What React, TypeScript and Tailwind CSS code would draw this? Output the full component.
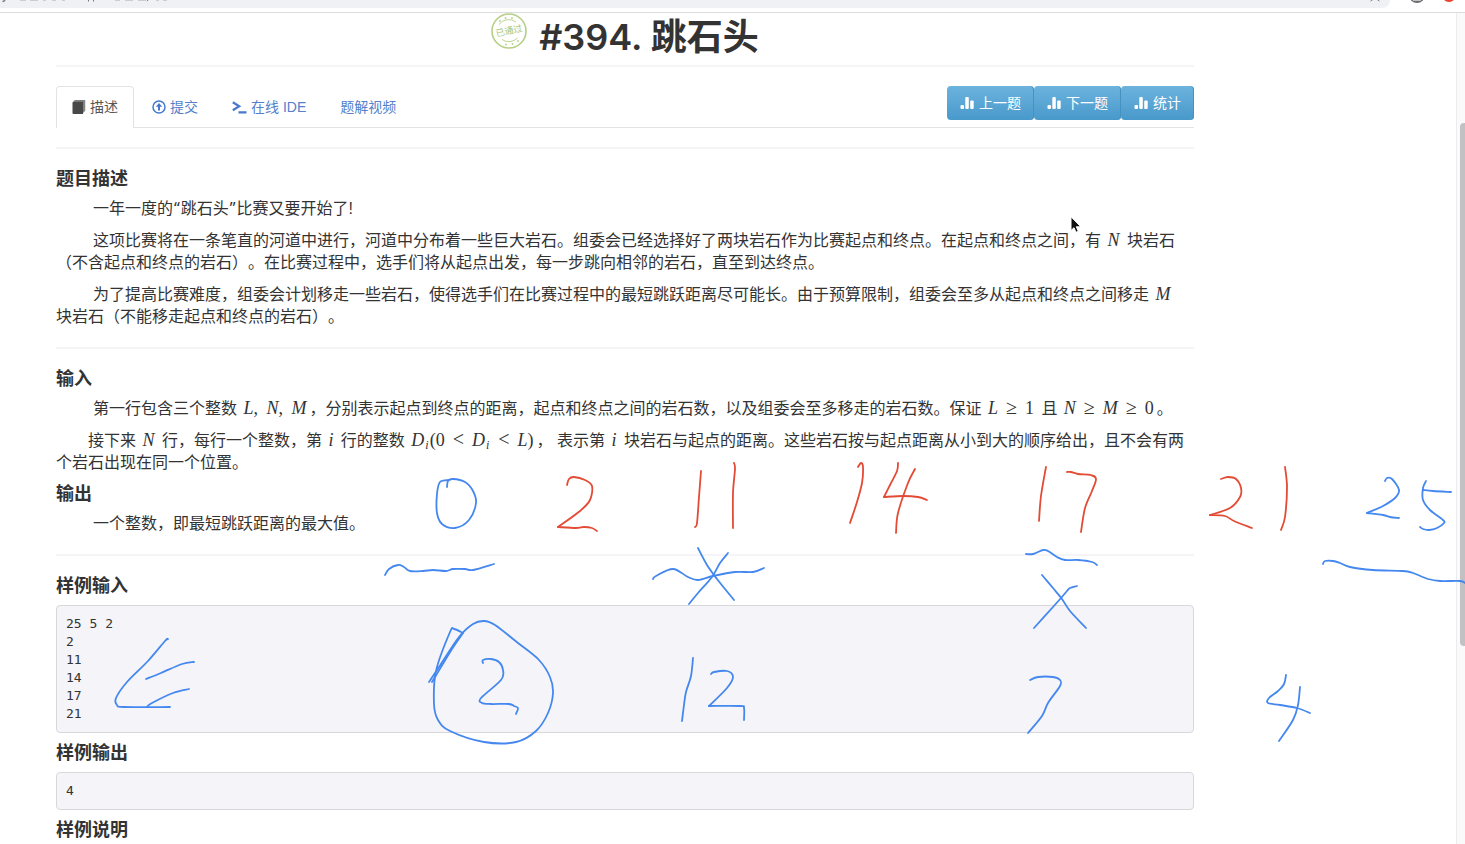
import type { ReactNode } from "react";

type Point = [number, number];
type Stroke = { ink: "blue" | "red"; points: Point[] };

const STROKES: Stroke[] = [
  // 0
  { ink: "blue", points: [[447, 487], [448, 481], [453, 479], [465, 482], [473, 491], [476, 503], [469, 520], [455, 528], [442, 524], [437, 513], [437, 494], [440, 482], [449, 480]] },
  // 2
  { ink: "red", points: [[567, 485], [569, 479], [574, 477], [585, 480], [592, 486], [590, 500], [580, 511], [558, 527]] },
  { ink: "red", points: [[558, 527], [576, 528], [584, 527], [592, 528], [597, 531]] },
  // 11
  { ink: "red", points: [[701, 471], [699, 497], [697, 523], [695, 527]] },
  { ink: "red", points: [[734, 463], [735, 469], [733, 493], [733, 528]] },
  // 14
  { ink: "red", points: [[858, 467], [861, 463], [863, 467], [862, 483], [857, 502], [850, 523]] },
  { ink: "red", points: [[898, 463], [897, 471], [890, 485], [884, 497]] },
  { ink: "red", points: [[884, 497], [903, 496], [918, 497], [927, 500]] },
  { ink: "red", points: [[915, 469], [908, 483], [898, 513], [896, 533]] },
  // 17
  { ink: "red", points: [[1046, 467], [1041, 496], [1039, 521]] },
  { ink: "red", points: [[1067, 472], [1071, 472], [1078, 474], [1091, 475], [1096, 479], [1092, 491], [1085, 508], [1081, 532]] },
  // 21
  { ink: "red", points: [[1221, 479], [1228, 477], [1236, 479], [1241, 488], [1240, 497], [1230, 508], [1210, 515]] },
  { ink: "red", points: [[1210, 515], [1225, 516], [1234, 521], [1252, 528]] },
  { ink: "red", points: [[1285, 467], [1287, 487], [1285, 517], [1281, 530]] },
  // 25
  { ink: "blue", points: [[1385, 481], [1387, 478], [1392, 479], [1399, 490], [1395, 498], [1383, 506], [1367, 513]] },
  { ink: "blue", points: [[1367, 513], [1383, 515], [1390, 517], [1399, 518]] },
  { ink: "blue", points: [[1426, 481], [1423, 488], [1423, 500], [1430, 510], [1443, 520], [1444, 523], [1437, 528], [1429, 530], [1423, 529], [1420, 527]] },
  { ink: "blue", points: [[1423, 490], [1433, 491], [1451, 492]] },
  // underlines
  { ink: "blue", points: [[385, 575], [389, 569], [398, 565], [404, 567], [410, 571], [423, 571], [433, 570], [446, 571], [453, 569], [465, 569], [473, 570], [494, 564]] },
  { ink: "blue", points: [[653, 579], [656, 576], [673, 569], [688, 577], [698, 580], [713, 576], [735, 572], [753, 572], [764, 568]] },
  { ink: "blue", points: [[1026, 554], [1033, 554], [1043, 550], [1048, 551], [1057, 557], [1065, 560], [1078, 560], [1092, 562], [1097, 565]] },
  { ink: "blue", points: [[1323, 564], [1325, 561], [1333, 561], [1340, 563], [1350, 567], [1373, 570], [1403, 571], [1413, 573], [1428, 579], [1440, 581], [1460, 581], [1465, 583]] },
  // crosses
  { ink: "blue", points: [[698, 548], [707, 565], [717, 579], [734, 600]] },
  { ink: "blue", points: [[728, 553], [720, 563], [712, 577], [698, 593], [689, 604]] },
  { ink: "blue", points: [[1042, 575], [1053, 588], [1062, 599], [1070, 611], [1086, 628]] },
  { ink: "blue", points: [[1077, 586], [1070, 588], [1067, 591], [1061, 598], [1053, 607], [1034, 628]] },
  // arrow
  { ink: "blue", points: [[168, 639], [165, 641], [148, 661], [127, 682], [116, 698], [117, 705], [124, 707], [170, 707]] },
  { ink: "blue", points: [[146, 679], [161, 673], [182, 664], [194, 662]] },
  { ink: "blue", points: [[147, 707], [152, 703], [173, 693], [189, 689]] },
  // circled 2
  { ink: "blue", points: [[429, 682], [439, 667], [459, 637], [473, 624], [484, 621], [495, 625], [518, 643], [539, 660], [550, 677], [553, 693], [548, 713], [536, 731], [516, 742], [484, 742], [450, 731], [438, 720], [434, 704], [436, 671], [450, 632], [454, 629], [463, 633]] },
  { ink: "blue", points: [[463, 633], [452, 649], [432, 682]] },
  { ink: "blue", points: [[483, 663], [483, 660], [491, 659], [499, 662], [503, 670], [501, 680], [481, 698], [482, 703], [491, 704], [509, 704], [514, 706], [518, 708], [516, 714]] },
  // 12
  { ink: "blue", points: [[693, 658], [691, 676], [686, 692], [684, 705], [682, 721]] },
  { ink: "blue", points: [[711, 674], [714, 672], [727, 671], [733, 677], [727, 688], [709, 706]] },
  { ink: "blue", points: [[709, 706], [740, 706], [744, 708], [744, 720]] },
  // 7
  { ink: "blue", points: [[1030, 680], [1038, 677], [1053, 677], [1060, 680], [1060, 686], [1048, 703], [1042, 716], [1028, 733]] },
  // 4
  { ink: "blue", points: [[1286, 675], [1284, 684], [1278, 691], [1269, 698], [1268, 703], [1280, 705], [1297, 708], [1310, 713]] },
  { ink: "blue", points: [[1300, 687], [1298, 705], [1293, 720], [1279, 741]] },
];

// Catmull-Rom spline through the pen samples, written as cubic Béziers.
function smoothPath(points: Point[]): string {
  let d = `M${points[0][0]} ${points[0][1]}`;
  for (let i = 0; i < points.length - 1; i++) {
    const a = points[Math.max(i - 1, 0)];
    const b = points[i];
    const c = points[i + 1];
    const e = points[Math.min(i + 2, points.length - 1)];
    d += `C${b[0] + (c[0] - a[0]) / 6} ${b[1] + (c[1] - a[1]) / 6} ${c[0] - (e[0] - b[0]) / 6} ${c[1] - (e[1] - b[1]) / 6} ${c[0]} ${c[1]}`;
  }
  return d;
}

function Annotations() {
  return (
    <svg className="pointer-events-none absolute inset-0 h-full w-full" fill="none" strokeWidth="1.8" strokeLinecap="round" strokeLinejoin="round" aria-hidden="true">
      {STROKES.map((s, i) => (
        <path key={i} d={smoothPath(s.points)} stroke={s.ink === "blue" ? "#4488ef" : "#e34b35"} />
      ))}
      <path d="M1071 217v13.500l3-2.800 2 4.600 2.300-1-2-4.500h4.200z" fill="#111" stroke="#fff" strokeWidth="1" />
    </svg>
  );
}

function BrowserBar() {
  return (
    <header className="h-[13px] border-b border-[#dcdcde] bg-white">
      <div className="flex h-2 items-start">
        <div className="flex h-2 flex-1 justify-between rounded-br-lg bg-[#f0f1f5]">
          <svg width="180" height="4" viewBox="0 0 180 4" fill="none" stroke="#77797c" aria-hidden="true">
            <path d="M2.500 1.500c1.500 0 2-.5 2.500-1.500" strokeWidth="1.500" />
            <path d="M20 .1h6m4 0h8m5 0h3m6 0h4m6 0h3m50 0h5m5 0h8m5 0h8m10 0h3m4 0h4" strokeWidth=".5" />
            <path d="M88.500 0v1.500m5-1.500v1.500M148 0l-1 1.200" />
          </svg>
          <svg width="24" height="4" viewBox="0 0 24 4" fill="none" stroke="#8a8c90" aria-hidden="true">
            <path d="M4.500 1 6.500 0m5 0 2 1" />
          </svg>
        </div>
        <svg className="ml-4" width="59" height="8" viewBox="0 0 59 8" aria-hidden="true">
          <circle cx="11" cy="-5" r="8" fill="#6b6d70" />
          <path d="M7 0h8v.8H7z" fill="#d7d8da" />
          <circle cx="43" cy="-5" r="7" fill="#e8432e" />
        </svg>
      </div>
    </header>
  );
}

function PassedStamp() {
  return (
    <svg width="36" height="36" viewBox="0 0 36 36" fill="none" stroke="#b6cf86" role="img" aria-label="已通过">
      <circle cx="18" cy="18" r="17" strokeWidth="1.600" />
      <path d="M8 11.500a12 12 0 0 1 17-2.500M11 26.500a12 12 0 0 0 15.500-1.500" strokeWidth=".9" />
      <g fill="#b6cf86" stroke="none">
        <circle cx="9" cy="8" r=".9" /><circle cx="14.500" cy="5" r=".9" /><circle cx="21" cy="5" r=".9" />
        <circle cx="15" cy="31.500" r=".9" /><circle cx="21.500" cy="31" r=".9" /><circle cx="27" cy="28" r=".9" />
      </g>
      <text x="18" y="21" textAnchor="middle" transform="rotate(-12 18 18)" fontSize="9" fill="#a9c673" stroke="none">已通过</text>
    </svg>
  );
}

function BookIcon() {
  return (
    <svg width="14" height="14" viewBox="0 0 14 14" aria-hidden="true">
      <path d="M2.500 0H13v11l-2 2.500V2H1z" fill="#a9a9a9" />
      <path d="M1.500 1.800h9.500V14H1.500A1 1 0 0 1 .5 13V2.800a1 1 0 0 1 1-1z" fill="#484848" />
      <path d="M2 1.400h9.600V12M2.800.4h10V11" fill="none" stroke="#6a6a6a" strokeWidth=".7" />
    </svg>
  );
}

function UploadIcon() {
  return (
    <svg width="14" height="14" viewBox="0 0 14 14" fill="none" stroke="#4379cf" aria-hidden="true">
      <circle cx="7" cy="7" r="6" strokeWidth="1.500" />
      <path d="M7 10.500V6" strokeWidth="2" />
      <path d="M7 3 3.800 6.800h6.400z" fill="#4379cf" stroke="none" />
    </svg>
  );
}

function TerminalIcon() {
  return (
    <svg width="15" height="14" viewBox="0 0 15 14" fill="none" stroke="#4b78cc" strokeWidth="2.200" aria-hidden="true">
      <path d="m.8 2.200 6.400 4-6.400 4M6.500 12.400h8" />
    </svg>
  );
}

function StatsIcon() {
  return (
    <svg width="14" height="14" viewBox="0 0 14 14" fill="#fff" aria-hidden="true">
      <rect x="0.500" y="9" width="3.500" height="4" rx="1" />
      <rect x="5.300" y="1" width="3.500" height="12" rx="1" />
      <rect x="10.200" y="4.500" width="3.500" height="8.500" rx="1" />
    </svg>
  );
}

function Tab({ icon, active, children }: { icon?: ReactNode; active?: boolean; children: ReactNode }) {
  return (
    <li className={active ? "-mb-px rounded-t border border-b-0 border-[#e3e3e6] bg-white text-[#555]" : "border border-b-0 border-transparent text-[#5580cb]"}>
      <a href="#" className="flex h-10 items-center gap-1 px-[15px] text-sm">
        {icon}
        <span>{children}</span>
      </a>
    </li>
  );
}

function NavButton({ children }: { children: ReactNode }) {
  return (
    <button type="button" className="flex h-[34px] items-center gap-[5px] rounded bg-gradient-to-b from-[#6cb3de] to-[#4899cb] px-[13px] text-sm text-white shadow-[inset_-1px_0_0_#4591c0]">
      <StatsIcon />
      <span>{children}</span>
    </button>
  );
}

function Heading({ children }: { children: ReactNode }) {
  return <h2 className="mt-[9px] mb-2 text-lg leading-[22px] font-bold text-[#333]">{children}</h2>;
}

function Rule() {
  return <hr className="my-[19px] border-t-2 border-[#f5f5f7]" />;
}

function M({ children }: { children: ReactNode }) {
  return <span className="mr-[3px] ml-[2px] font-['Liberation_Serif',serif] text-[18px] leading-none">{children}</span>;
}

function Rel({ children }: { children: ReactNode }) {
  return <span className="mx-2 text-xl leading-[0]">{children}</span>;
}

function Comma() {
  return <span className="mr-1">,</span>;
}

function SubI() {
  return <sub className="mx-px text-xs leading-none"><i>i</i></sub>;
}

function Quote({ children }: { children: ReactNode }) {
  return <span className="px-px font-['Noto_Sans',sans-serif] leading-none">{children}</span>;
}

function Sample({ children }: { children: string }) {
  return (
    <pre className="rounded border border-[#d8d8da] bg-[#f5f4f8] p-[9px] font-['DejaVu_Sans_Mono',monospace] text-[13px] leading-[18px] text-[#333]">{children}</pre>
  );
}

export default function App() {
  return (
    <div className="relative flex min-h-screen flex-col overflow-hidden bg-white font-['Liberation_Sans','Noto_Sans_CJK_SC',sans-serif] text-[#333] [text-spacing-trim:space-all]">
      <BrowserBar />
      <div className="flex flex-1">
        <main className="min-w-0 flex-1 pl-14">
          <div className="max-w-[1138px]">
            <div className="flex h-[52px] justify-center gap-3">
              <PassedStamp />
              <h1 className="font-['Inter','Noto_Sans_CJK_SC',sans-serif] text-4xl leading-[48px] font-semibold">#394. 跳石头</h1>
            </div>
            <hr className="border-t-2 border-[#f5f5f7]" />
            <nav className="my-[19px] flex items-end justify-between border-b border-[#e3e3e6]">
              <ul className="flex gap-[2px]">
                <Tab active icon={<BookIcon />}>描述</Tab>
                <Tab icon={<UploadIcon />}>提交</Tab>
                <Tab icon={<TerminalIcon />}>在线 IDE</Tab>
                <Tab>题解视频</Tab>
              </ul>
              <div className="flex self-start">
                <NavButton>上一题</NavButton>
                <NavButton>下一题</NavButton>
                <NavButton>统计</NavButton>
              </div>
            </nav>

            <Rule />
            <Heading>题目描述</Heading>
            <div className="flex flex-col gap-[10px] indent-[37px] text-base leading-[22px]">
              <p>一年一度的<Quote>“</Quote>跳石头<Quote>”</Quote>比赛又要开始了!</p>
              <p>
                这项比赛将在一条笔直的河道中进行，河道中分布着一些巨大岩石。组委会已经选择好了两块岩石作为比赛起点和终点。在起点和终点之间，有 <M><i>N</i></M> 块岩石
                <br />
                （不含起点和终点的岩石）。在比赛过程中，选手们将从起点出发，每一步跳向相邻的岩石，直至到达终点。
              </p>
              <p>
                为了提高比赛难度，组委会计划移走一些岩石，使得选手们在比赛过程中的最短跳跃距离尽可能长。由于预算限制，组委会至多从起点和终点之间移走 <M><i>M</i></M>
                <br />
                块岩石（不能移走起点和终点的岩石）。
              </p>
            </div>

            <Rule />
            <Heading>输入</Heading>
            <div className="flex flex-col gap-[10px] text-base leading-[22px]">
              <p className="indent-[37px]">
                第一行包含三个整数 <M><i>L</i><Comma /> <i>N</i><Comma /> <i>M</i></M>，分别表示起点到终点的距离，起点和终点之间的岩石数，以及组委会至多移走的岩石数。保证 <M><i>L</i><Rel>≥</Rel>1</M> 且 <M><i>N</i><Rel>≥</Rel><i>M</i><Rel>≥</Rel>0</M>。
              </p>
              <p className="indent-8">
                接下来 <M><i>N</i></M> 行，每行一个整数，第 <M><i>i</i></M> 行的整数 <M><i>D</i><SubI />(0<Rel>&lt;</Rel><i>D</i><SubI /><Rel>&lt;</Rel><i>L</i>)</M>，&nbsp;表示第 <M><i>i</i></M> 块岩石与起点的距离。这些岩石按与起点距离从小到大的顺序给出，且不会有两
                <br />
                个岩石出现在同一个位置。
              </p>
            </div>
            <Heading>输出</Heading>
            <p className="indent-[37px] text-base leading-[22px]">一个整数，即最短跳跃距离的最大值。</p>

            <Rule />
            <Heading>样例输入</Heading>
            <Sample>{"25 5 2\n2\n11\n14\n17\n21"}</Sample>
            <Heading>样例输出</Heading>
            <Sample>4</Sample>
            <Heading>样例说明</Heading>
          </div>
        </main>
        <div className="flex w-[9px] flex-col items-end border-l border-[#ececee] bg-[#fafafa]">
          <div className="mt-[110px] h-[523px] w-[5px] rounded-l bg-[#c1c1c3]" />
        </div>
      </div>
      <Annotations />
    </div>
  );
}
